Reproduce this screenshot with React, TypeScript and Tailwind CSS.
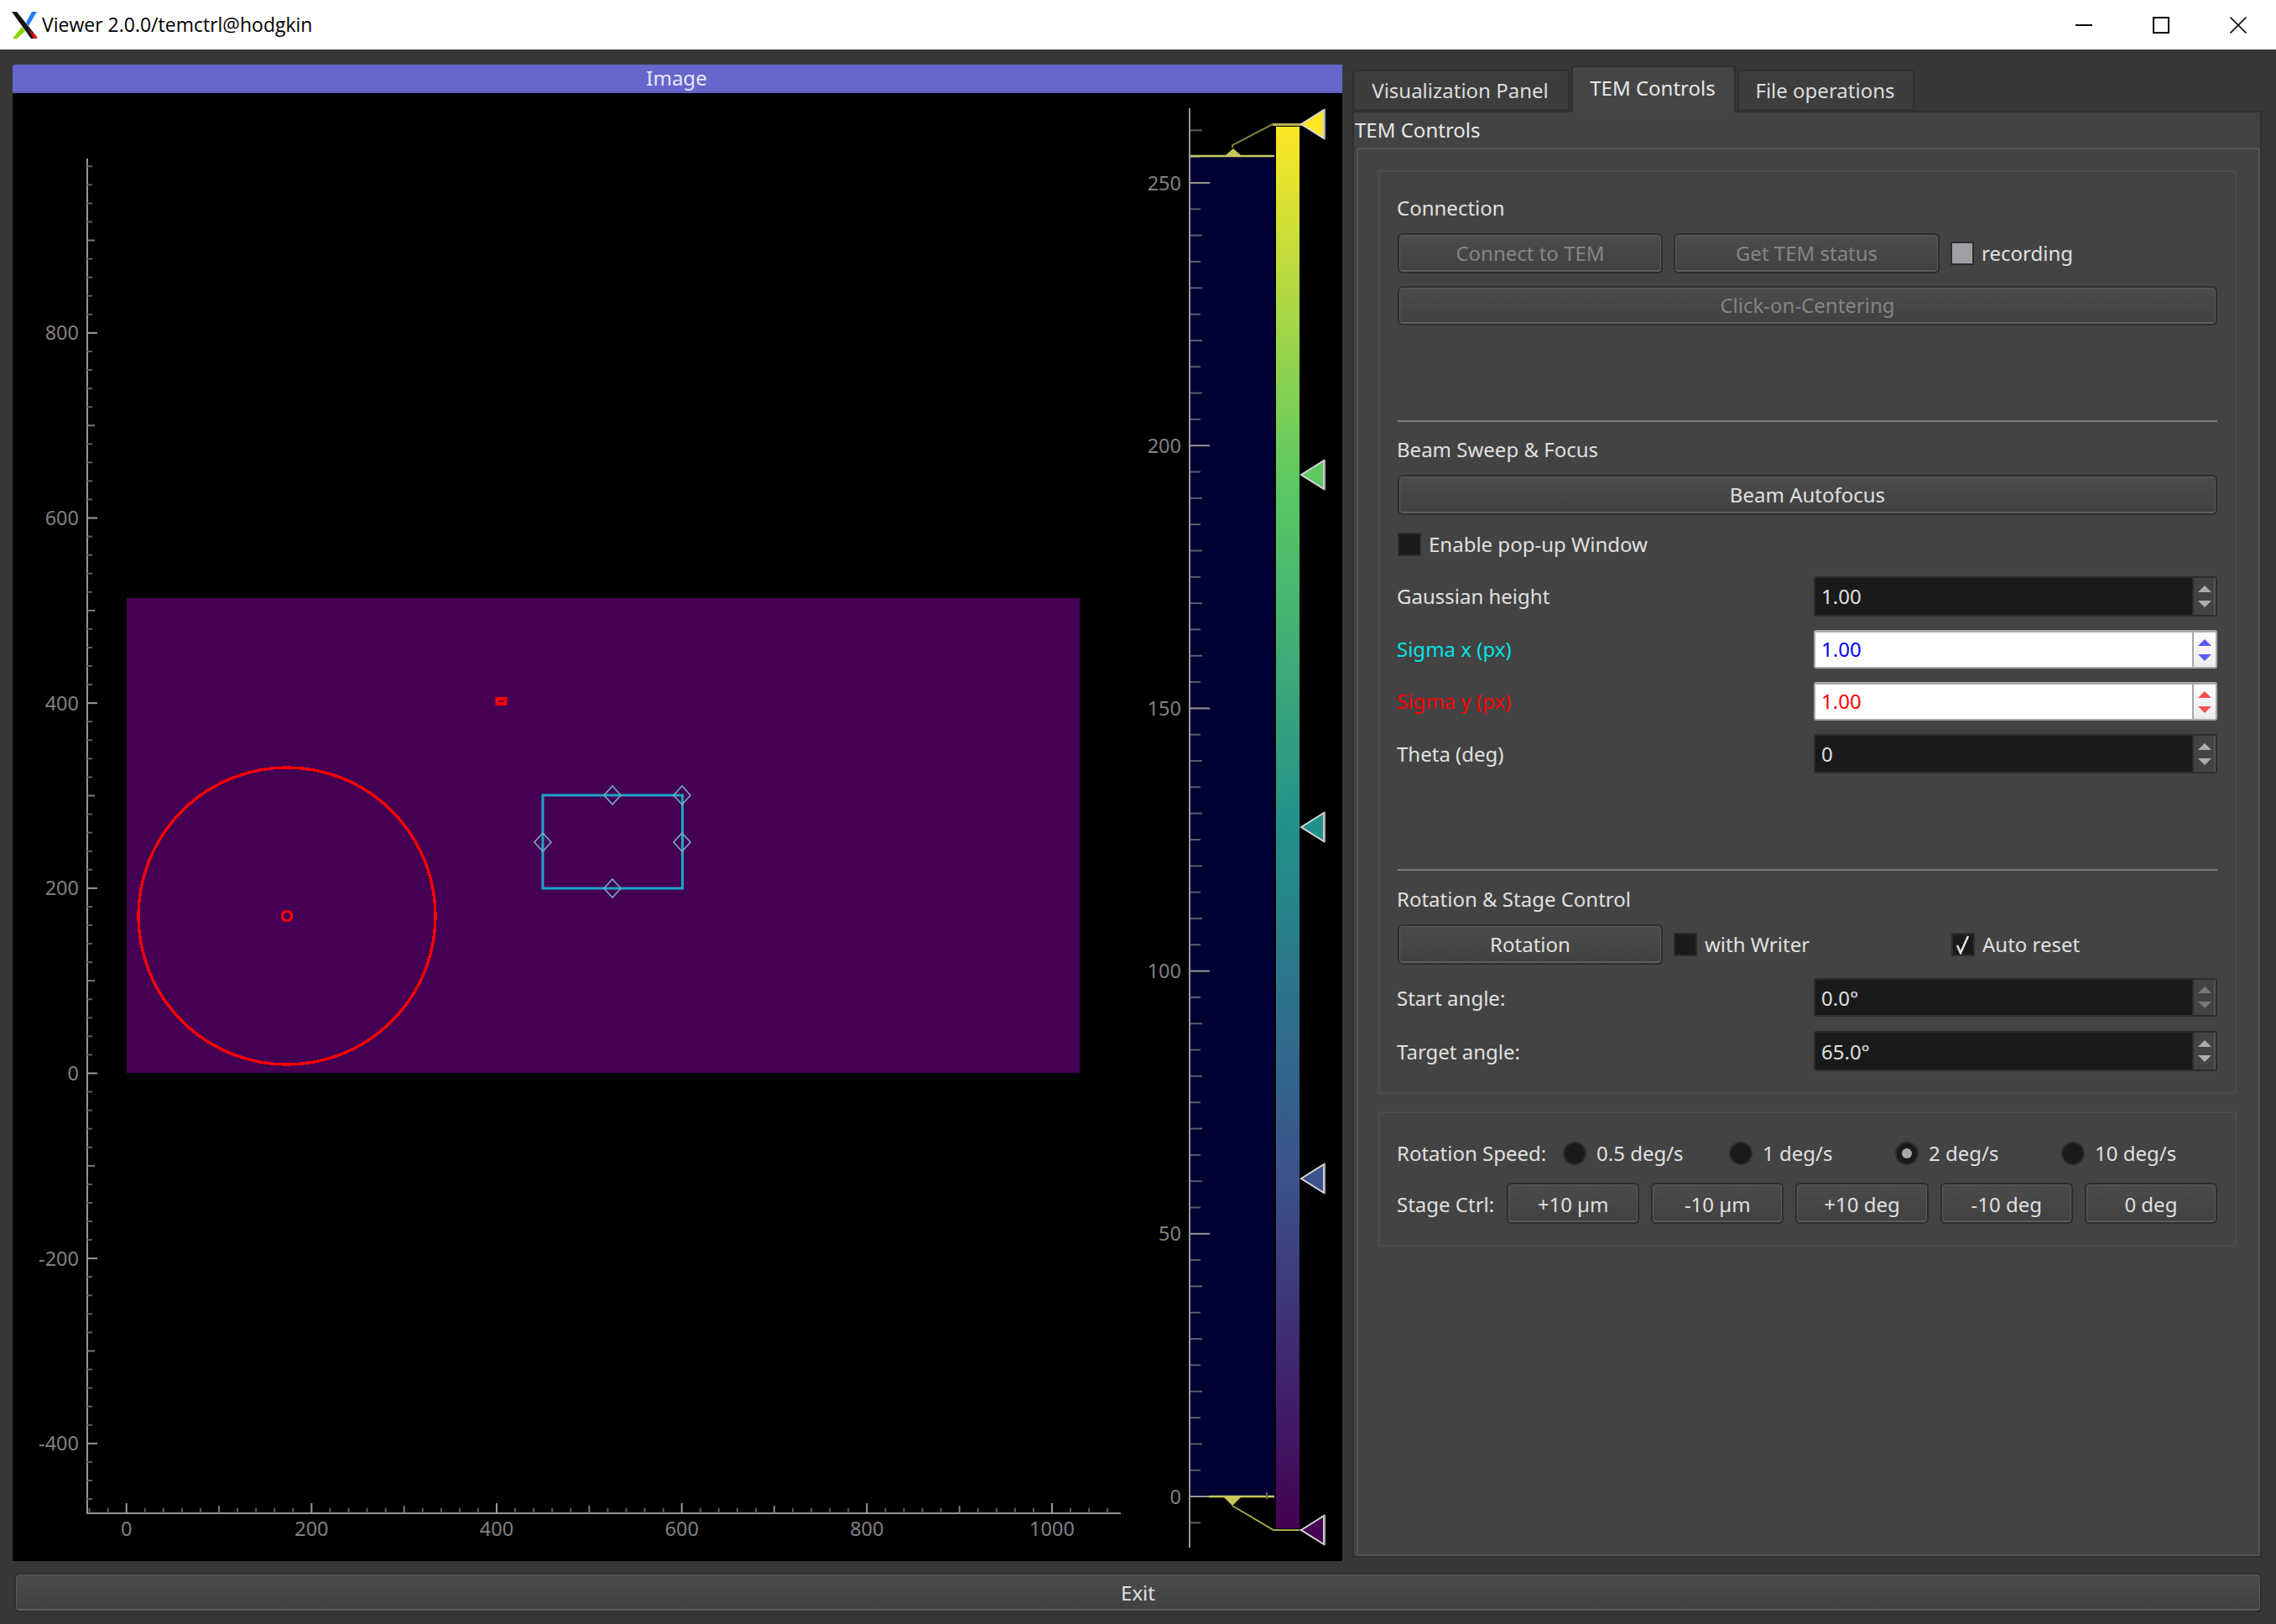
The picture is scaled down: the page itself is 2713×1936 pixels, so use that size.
import React from "react";

const FONT = "font-['Noto_Sans',sans-serif]";

function range(from: number, to: number, step: number) {
  const out: number[] = [];
  for (let v = from; v <= to; v += step) out.push(v);
  return out;
}

function XLogo() {
  return (
    <svg width="34" height="34" viewBox="0 0 34 34" className="ml-[12px] shrink-0">
      <polygon points="2,1 8,1 32,31 32,33 25,33" fill="#111111" />
      <polygon points="19,14 26,1 32,1 22,18" fill="#1f7fff" />
      <polygon points="14,19 18,24 8,33 3,33" fill="#86d400" />
      <polygon points="22,22 27,26 32,31 32,33 28,33" fill="#e01010" />
    </svg>
  );
}

function TitleBar() {
  return (
    <div className="h-[59px] bg-white flex items-center shrink-0">
      <XLogo />
      <span className="ml-[4px] text-[23px] text-black font-['Open_Sans',sans-serif]">
        Viewer 2.0.0/temctrl@hodgkin
      </span>
      <div className="ml-auto flex">
        <div className="w-[92px] h-[59px] flex items-center justify-center">
          <div className="w-[20px] h-[2px] bg-black" />
        </div>
        <div className="w-[92px] h-[59px] flex items-center justify-center">
          <div className="w-[20px] h-[20px] border-2 border-black" />
        </div>
        <div className="w-[91px] h-[59px] flex items-center justify-center">
          <svg width="20" height="20" viewBox="0 0 20 20" stroke="#111" strokeWidth="1.6">
            <line x1="0.5" y1="0.5" x2="19.5" y2="19.5" />
            <line x1="19.5" y1="0.5" x2="0.5" y2="19.5" />
          </svg>
        </div>
      </div>
    </div>
  );
}

const Y = (v: number) => 1279.5 - 1.1033 * v;
const X = (v: number) => 150.7 + 1.1033 * v;
const C = (v: number) => 1784 - 6.264 * v;

function tickStyle(v: number) {
  if (v % 200 === 0) return { len: 12, color: "#9a9a9a" };
  if (v % 100 === 0) return { len: 9, color: "#7a7a7a" };
  return { len: 6, color: "#5c5c5c" };
}

function Marker({ y, fill }: { y: number; fill: string }) {
  return (
    <g>
      <polygon points={`1551,${y} 1578,${y - 17} 1578,${y + 17}`} fill={fill} stroke="#d8d8d8" strokeWidth="2" />
      <line x1="1579" y1={y - 18} x2="1579" y2={y + 18} stroke="#a8a8a8" strokeWidth="2" />
    </g>
  );
}

function Plot() {
  const handles = [
    [730, 948],
    [813, 948],
    [647, 1004],
    [813, 1004],
    [730, 1059],
  ];
  return (
    <svg
      width="1585"
      height="1750"
      viewBox="15 111 1585 1750"
      className="block bg-black"
      fontFamily="'Noto Sans', sans-serif"
      fontSize="23.5"
    >
      <rect x="151" y="713" width="1136" height="566" fill="#440154" />
      <circle cx="342" cy="1092" r="177" fill="none" stroke="#ff0000" strokeWidth="3.5" shapeRendering="crispEdges" />
      <circle cx="342" cy="1092" r="5.5" fill="none" stroke="#ff0000" strokeWidth="3.5" shapeRendering="crispEdges" />
      <rect x="592.5" y="833" width="10" height="6" fill="none" stroke="#ff0000" strokeWidth="4" />
      <rect x="647" y="948" width="166.5" height="111" fill="none" stroke="#1ea5c8" strokeWidth="3" />
      {handles.map(([x, y]) => (
        <polygon
          key={`${x}-${y}`}
          points={`${x},${y - 11} ${x + 10},${y} ${x},${y + 11} ${x - 10},${y}`}
          fill="none"
          stroke="#79a9c4"
          strokeWidth="1.6"
        />
      ))}

      {/* image axes */}
      <line x1="104" y1="189" x2="104" y2="1805" stroke="#969696" strokeWidth="2" />
      <line x1="103" y1="1804" x2="1336" y2="1804" stroke="#969696" strokeWidth="2" />
      {range(-460, 980, 20).map((v) => {
        const t = tickStyle(v);
        return <line key={v} x1="104" y1={Y(v)} x2={104 + t.len} y2={Y(v)} stroke={t.color} strokeWidth="2" />;
      })}
      {range(-40, 1060, 20).map((v) => {
        const t = tickStyle(v);
        return <line key={v} x1={X(v)} y1="1804" x2={X(v)} y2={1804 - t.len} stroke={t.color} strokeWidth="2" />;
      })}
      {[800, 600, 400, 200, 0, -200, -400].map((v) => (
        <text key={v} x="94" y={Y(v) + 8.5} textAnchor="end" fill="#808080">
          {v}
        </text>
      ))}
      {[0, 200, 400, 600, 800, 1000].map((v) => (
        <text key={v} x={X(v)} y="1831" textAnchor="middle" fill="#808080">
          {v}
        </text>
      ))}

      {/* histogram */}
      <rect x="1419" y="187" width="100" height="1597" fill="#000033" />
      <line x1="1418" y1="129" x2="1418" y2="1845" stroke="#969696" strokeWidth="2" />
      {range(-5, 260, 5).map((v) => {
        const big = v % 50 === 0;
        const len = big ? 23 : v % 10 === 0 ? 14 : 12;
        return (
          <line
            key={v}
            x1="1419"
            y1={C(v)}
            x2={1419 + len}
            y2={C(v)}
            stroke={big ? "#969696" : "#5c5c6c"}
            strokeWidth="2"
          />
        );
      })}
      {[250, 200, 150, 100, 50, 0].map((v) => (
        <text key={v} x="1408" y={C(v) + 8.5} textAnchor="end" fill="#808080">
          {v}
        </text>
      ))}
      <line x1="1419" y1="186" x2="1519" y2="186" stroke="#c8c85a" strokeWidth="2.5" />
      <polygon points="1461,185 1470,177 1479,185" fill="#c8c85a" />
      <polyline points="1469,176 1469,173 1517,148 1552,148" fill="none" stroke="#80803e" strokeWidth="2" />
      <line x1="1517" y1="148.5" x2="1552" y2="148.5" stroke="#b4b452" strokeWidth="3" />
      <line x1="1441" y1="1784" x2="1519" y2="1784" stroke="#c8c85a" strokeWidth="2.5" />
      <line x1="1510" y1="1779" x2="1510" y2="1787" stroke="#6b6b50" strokeWidth="2" />
      <polygon points="1459,1785 1479,1785 1469,1795" fill="#c8c85a" />
      <polyline points="1469,1795 1518,1824 1552,1824" fill="none" stroke="#a8a84c" strokeWidth="2" />

      {/* gradient bar */}
      <foreignObject x="1521" y="151" width="28" height="1671">
        <div className="w-full h-full bg-[linear-gradient(to_bottom,#fde725_0%,#5ec962_25%,#21918c_50%,#3b528b_75%,#440154_100%)]" />
      </foreignObject>
      <Marker y={148} fill="#fde725" />
      <Marker y={566} fill="#5ec962" />
      <Marker y={986} fill="#21918c" />
      <Marker y={1405} fill="#3b528b" />
      <Marker y={1824} fill="#440154" />
    </svg>
  );
}

function Button({ label, disabled, className }: { label: string; disabled?: boolean; className?: string }) {
  return (
    <div
      className={`flex items-center justify-center rounded-[6px] border-2 border-[#2e2e2e] bg-[linear-gradient(to_bottom,#4c4c4c,#404040)] shadow-[inset_0_0_0_1px_#5a5a5a,inset_0_-2px_0_#5f5f5f] text-[24px] ${
        disabled ? "text-[#858585]" : "text-[#e0e0e0]"
      } ${className ?? ""}`}
    >
      {label}
    </div>
  );
}

function Arrow({ up, color }: { up?: boolean; color: string }) {
  return (
    <svg width="16" height="8" viewBox="0 0 16 8" className="block">
      <polygon points={up ? "8,0 16,8 0,8" : "0,0 16,0 8,8"} fill={color} />
    </svg>
  );
}

function Spin({
  value,
  tone = "dark",
  dim,
  className,
}: {
  value: string;
  tone?: "dark" | "blue" | "red";
  dim?: boolean;
  className?: string;
}) {
  const light = tone !== "dark";
  const arrow = tone === "blue" ? "#5a5aff" : tone === "red" ? "#ff5050" : dim ? "#787878" : "#adadad";
  return (
    <div
      className={`ml-auto w-[481px] flex rounded-[3px] border-2 ${
        light ? "border-[#a8a8a8] border-t-[3px] bg-white" : "border-[#2d2d2d] bg-[#1a1a1a]"
      } ${className ?? ""}`}
    >
      <div
        className={`flex-1 pl-[7px] flex items-center text-[24px] ${
          tone === "blue" ? "text-[#0000ff] pb-[2px]" : tone === "red" ? "text-[#ff0000] pb-[2px]" : "text-[#e0e0e0]"
        } ${dim || value === "65.0°" ? "pt-[2px]" : ""}`}
      >
        {value}
      </div>
      <div
        className={`w-[28px] flex flex-col items-center justify-center gap-[10px] border-l-2 ${
          light
            ? "border-[#a8a8a8] bg-[linear-gradient(to_bottom,#ffffff,#ececec)]"
            : "border-[#2d2d2d] bg-[#434343] shadow-[inset_-2px_0_0_#555555]"
        }`}
      >
        <Arrow up color={arrow} />
        <Arrow color={arrow} />
      </div>
    </div>
  );
}

function Check({
  label,
  checked,
  grey,
  className,
}: {
  label: string;
  checked?: boolean;
  grey?: boolean;
  className?: string;
}) {
  return (
    <div className={`flex items-center gap-[9px] text-[24px] text-[#e0e0e0] ${className ?? ""}`}>
      <div
        className={`w-[28px] h-[28px] shrink-0 flex items-center justify-center border-2 border-[#2d2d2d] ${
          grey ? "bg-[#a0a0a4]" : "bg-[#1a1a1a]"
        }`}
      >
        {checked && (
          <svg width="18" height="24" viewBox="0 0 18 24" fill="none" stroke="#e6e6e6" strokeWidth="2.5">
            <polyline points="2,13 6,22 15,2" />
          </svg>
        )}
      </div>
      {label}
    </div>
  );
}

function Radio({ label, on, width }: { label: string; on?: boolean; width: string }) {
  return (
    <div className={`flex items-center gap-[12px] text-[24px] text-[#e0e0e0] ${width}`}>
      <div className="w-[28px] h-[28px] rounded-full bg-[#1a1a1a] border-2 border-[#2d2d2d] flex items-center justify-center">
        {on && <div className="w-[12px] h-[12px] rounded-full bg-[#a8a8a8]" />}
      </div>
      {label}
    </div>
  );
}

function Divider({ className }: { className: string }) {
  return <div className={`h-[2px] bg-[#7a7a7a] ${className}`} />;
}

function Row({
  label,
  color,
  nudge,
  children,
  className,
}: {
  label: string;
  color?: string;
  nudge?: boolean;
  children: React.ReactNode;
  className: string;
}) {
  return (
    <div className={`flex items-stretch ${className}`}>
      <span className={`-ml-[1px] flex items-center text-[24px] ${nudge ? "pt-[2px]" : ""} ${color ?? "text-[#e0e0e0]"}`}>
        {label}
      </span>
      {children}
    </div>
  );
}

function TemControls() {
  return (
    <div className="flex-1 border-2 border-[#2f2f2f] bg-[#434343] flex flex-col">
      <div className="h-[42px] pl-[1px] flex items-center text-[24px] text-[#e8e8e8]">TEM Controls</div>
      <div className="flex-1 ml-[3px] border-2 border-[#555555] rounded-[3px] pl-[24px] pr-[26px] pt-[25px]">
        <div className="h-[1101px] border-2 border-[#4c4c4c] rounded-[3px] px-[21px] flex flex-col">
          <div className="-ml-[1px] mt-[26px] h-[34px] flex items-center text-[24px] text-[#e0e0e0]">Connection</div>
          <div className="mt-[13px] flex h-[48px]">
            <Button label="Connect to TEM" disabled className="w-[316px]" />
            <Button label="Get TEM status" disabled className="w-[317px] ml-[13px]" />
            <Check label="recording" grey className="ml-[13px]" />
          </div>
          <Button label="Click-on-Centering" disabled className="mt-[15px] h-[47px] pb-[2px]" />

          <Divider className="mt-[113px]" />
          <div className="-ml-[1px] mt-[16px] h-[34px] flex items-center text-[24px] text-[#e0e0e0]">
            Beam Sweep &amp; Focus
          </div>
          <Button label="Beam Autofocus" className="mt-[13px] h-[48px]" />
          <Check label="Enable pop-up Window" className="mt-[21px] h-[28px]" />
          <Row label="Gaussian height" className="mt-[24px] h-[48px]">
            <Spin value="1.00" />
          </Row>
          <Row label="Sigma x (px)" color="text-[#00e5e5]" className="mt-[16px] h-[46px]">
            <Spin value="1.00" tone="blue" />
          </Row>
          <Row label="Sigma y (px)" color="text-[#ff0000]" className="mt-[16px] h-[46px]">
            <Spin value="1.00" tone="red" />
          </Row>
          <Row label="Theta (deg)" className="mt-[16px] h-[47px]">
            <Spin value="0" />
          </Row>

          <Divider className="mt-[114px]" />
          <div className="-ml-[1px] mt-[17px] h-[34px] flex items-center text-[24px] text-[#e0e0e0]">
            Rotation &amp; Stage Control
          </div>
          <div className="mt-[13px] flex h-[48px]">
            <Button label="Rotation" className="w-[316px]" />
            <Check label="with Writer" className="ml-[13px] w-[331px]" />
            <Check label="Auto reset" checked />
          </div>
          <Row label="Start angle:" nudge className="mt-[16px] h-[46px]">
            <Spin value="0.0°" dim />
          </Row>
          <Row label="Target angle:" nudge className="mt-[17px] h-[48px]">
            <Spin value="65.0°" />
          </Row>
        </div>
        <div className="mt-[21px] h-[161px] border-2 border-[#4c4c4c] rounded-[3px] px-[21px] flex flex-col">
          <div className="mt-[34px] h-[28px] flex items-center">
            <span className="-ml-[1px] w-[198px] text-[24px] text-[#e0e0e0]">Rotation Speed:</span>
            <Radio label="0.5 deg/s" width="w-[198px]" />
            <Radio label="1 deg/s" width="w-[198px]" />
            <Radio label="2 deg/s" on width="w-[198px]" />
            <Radio label="10 deg/s" width="w-[180px]" />
          </div>
          <div className="mt-[21px] flex items-stretch h-[49px]">
            <span className="-ml-[1px] w-[131px] pt-[2px] flex items-center text-[24px] text-[#e0e0e0]">Stage Ctrl:</span>
            <div className="flex-1 grid grid-cols-5 gap-[14px]">
              <Button label="+10 µm" className="pt-[2px]" />
              <Button label="-10 µm" className="pt-[2px]" />
              <Button label="+10 deg" className="pt-[2px]" />
              <Button label="-10 deg" className="pt-[2px]" />
              <Button label="0 deg" className="pt-[2px]" />
            </div>
          </div>
        </div>
      </div>
    </div>
  );
}

function Tab({ label, active }: { label: string; active?: boolean }) {
  return (
    <div
      className={
        active
          ? "relative z-10 -mb-[2px] ml-[2px] h-[56px] w-[196px] pb-[4px] pr-[2px] flex items-center justify-center rounded-t-[4px] border-2 border-b-0 border-[#2f2f2f] bg-[#454545] text-[24px] text-[#e8e8e8]"
          : "h-[49px] pr-[2px] flex items-center justify-center rounded-t-[4px] border-2 border-[#2f2f2f] bg-[#3d3d3d] text-[24px] text-[#dcdcdc]"
      }
    >
      {label}
    </div>
  );
}

export default function App() {
  return (
    <div className={`w-[2713px] h-[1936px] bg-[#373737] flex flex-col overflow-hidden ${FONT}`}>
      <TitleBar />
      <div className="h-[1816px] flex shrink-0 pl-[15px] pr-[17px]">
        <div className="w-[1585px] mt-[18px] shrink-0 flex flex-col">
          <div className="h-[34px] pr-[2px] bg-[#6666cc] border-b-[3px] border-[#6060c4] rounded-tl-[4px] flex items-center justify-center text-[24px] text-[#e8e8f8]">
            Image
          </div>
          <Plot />
        </div>
        <div className="ml-[12px] flex-1 flex flex-col">
          <div className="mt-[19px] h-[54px] flex items-end pr-[4px]">
            <div className="w-[259px]">
              <Tab label="Visualization Panel" />
            </div>
            <Tab label="TEM Controls" active />
            <div className="w-[211px] ml-[2px]">
              <Tab label="File operations" />
            </div>
          </div>
          <div className="h-[1725px] flex flex-col">
            <TemControls />
          </div>
        </div>
      </div>
      <div className="pl-[17px] pr-[17px]">
        <Button label="Exit" className="h-[47px]" />
      </div>
    </div>
  );
}
